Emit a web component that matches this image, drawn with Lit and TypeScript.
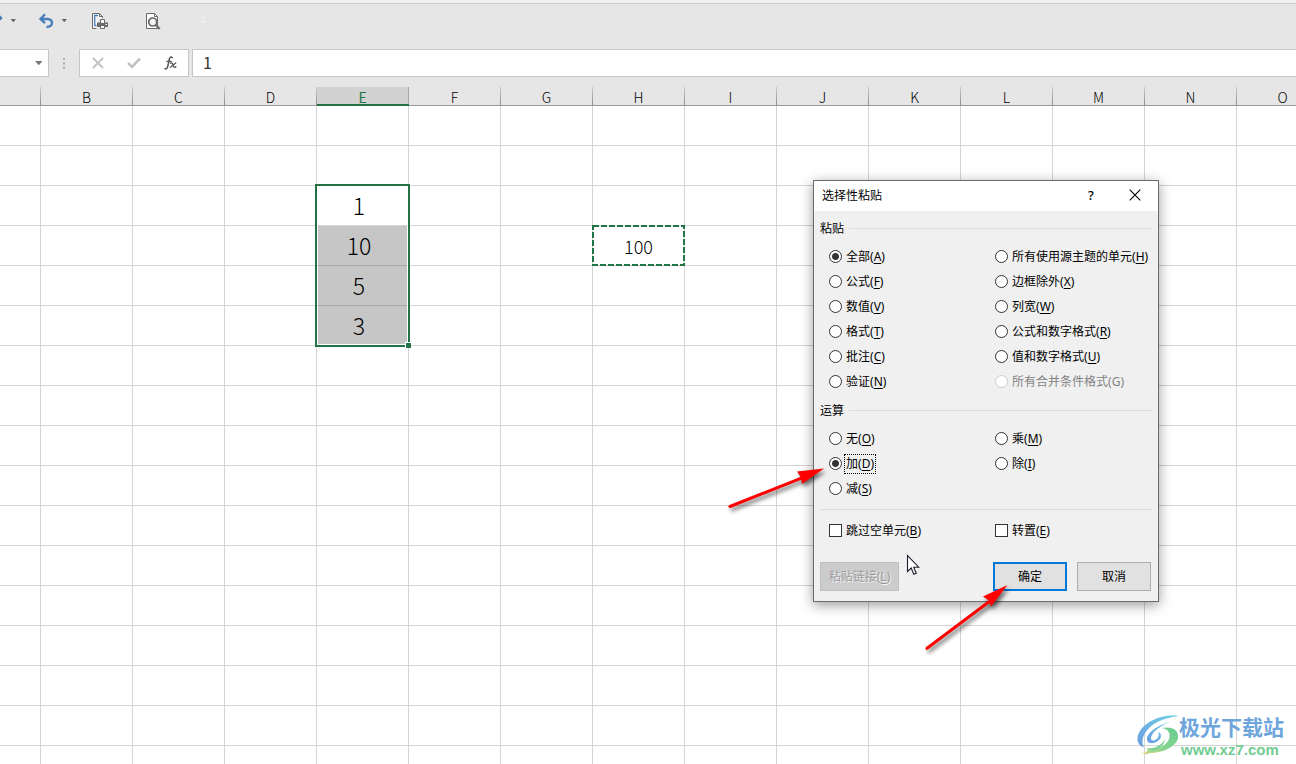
import { LitElement, html, css, nothing } from "lit";
import { customElement, state } from "lit/decorators.js";
import { classMap } from "lit/directives/class-map.js";

interface Choice {
  text: string;
  key: string;
  disabled?: boolean;
}

const PASTE: Choice[] = [
  { text: "全部", key: "A" },
  { text: "公式", key: "F" },
  { text: "数值", key: "V" },
  { text: "格式", key: "T" },
  { text: "批注", key: "C" },
  { text: "验证", key: "N" },
  { text: "所有使用源主题的单元", key: "H" },
  { text: "边框除外", key: "X" },
  { text: "列宽", key: "W" },
  { text: "公式和数字格式", key: "R" },
  { text: "值和数字格式", key: "U" },
  { text: "所有合并条件格式", key: "G", disabled: true },
];

const OPERATION: Choice[] = [
  { text: "无", key: "O" },
  { text: "加", key: "D" },
  { text: "减", key: "S" },
  { text: "乘", key: "M" },
  { text: "除", key: "I" },
];

@customElement("paste-dialog")
export class PasteDialog extends LitElement {
  @state() private paste = "A";
  @state() private operation = "D";

  static styles = css`
    :host {
      display: block;
      box-sizing: border-box;
      width: 346px;
      border: 1px solid #6b6b6b;
      background: #f0f0f0;
      box-shadow: 0 3px 12px rgba(0, 0, 0, 0.4);
      font: 12px/16px "Noto Sans", "Noto Sans CJK SC", sans-serif;
      color: #000;
    }
    .title {
      display: flex;
      align-items: flex-start;
      height: 30px;
      padding-left: 8px;
      background: #fff;
    }
    .title h1 {
      flex: 1;
      margin: 0;
      font-size: 12px;
      font-weight: 400;
      line-height: 30px;
    }
    .title button {
      display: grid;
      place-items: center;
      width: 44px;
      height: 28px;
      padding: 0;
      border: 0;
      background: none;
      font: 500 13px/16px "Noto Sans", sans-serif;
      color: #000;
    }
    .title button:last-child {
      margin-right: 1px;
    }
    .body {
      padding: 7px 6px 10px;
    }
    .heading {
      display: flex;
      align-items: center;
      gap: 5px;
      box-sizing: border-box;
      height: 20px;
      margin: 0;
      padding-top: 2px;
      font-size: 12px;
      font-weight: 400;
    }
    .heading::after {
      content: "";
      flex: 1;
      height: 1px;
      margin-bottom: 2px;
      background: #dcdcdc;
    }
    .choices {
      display: grid;
      grid-template-columns: 166px 1fr;
      grid-auto-flow: column;
      grid-auto-rows: 25px;
      padding: 6px 0 6px 9px;
    }
    .rows6 {
      grid-template-rows: repeat(6, 25px);
    }
    .rows3 {
      grid-template-rows: repeat(3, 25px);
      padding-bottom: 8px;
    }
    .checks {
      grid-template-rows: 25px;
      padding: 8px 0 19px 9px;
      border-top: 1px solid #dcdcdc;
    }
    label {
      display: flex;
      align-items: center;
      gap: 4px;
      white-space: nowrap;
    }
    label.off {
      color: #838383;
    }
    label.off u {
      text-decoration: none;
    }
    u {
      text-underline-offset: 2px;
      text-decoration-skip-ink: none;
    }
    input {
      appearance: none;
      flex: none;
      box-sizing: border-box;
      width: 13px;
      height: 13px;
      margin: 0;
      border: 1px solid #333;
      background: #fff;
      outline: none;
    }
    input[type="radio"] {
      border-radius: 50%;
    }
    input[type="radio"]:checked {
      background: radial-gradient(circle, #333 3px, #fff 4px);
    }
    input:disabled {
      border-color: #ccc;
    }
    .focus {
      outline: 1px dotted #000;
      outline-offset: 1px;
    }
    .actions {
      display: flex;
      gap: 10px;
      padding-right: 1px;
    }
    .actions button {
      box-sizing: border-box;
      width: 74px;
      height: 29px;
      padding: 0;
      border: 1px solid #adadad;
      background: #e1e1e1;
      font: inherit;
      color: #000;
    }
    .actions .link {
      width: 79px;
      margin-right: auto;
      border-color: #bfbfbf;
      background: #ccc;
      color: #9c9c9c;
      text-shadow: 1px 1px 0 #f4f4f4;
    }
    .actions .primary {
      border: 2px solid #0078d7;
    }
  `;

  private radio(group: "paste" | "operation", c: Choice) {
    const on = this[group] === c.key;
    return html`<label class=${classMap({ off: !!c.disabled })}>
      <input
        type="radio"
        name=${group}
        value=${c.key}
        .checked=${on}
        ?disabled=${c.disabled}
        @change=${() => (this[group] = c.key)}
      /><span class=${classMap({ focus: on && group === "operation" })}>${c.text}(<u>${c.key}</u>)</span>
    </label>`;
  }

  render() {
    return html`
      <div class="title">
        <h1>选择性粘贴</h1>
        <button type="button" aria-label="帮助">?</button>
        <button type="button" aria-label="关闭">
          <svg width="12" height="12" viewBox="0 0 12 12" stroke="#000" stroke-width="1.100">
            <path d="M.7 .7 11.300 11.300M11.300 .7 .7 11.300" />
          </svg>
        </button>
      </div>
      <div class="body">
        <h2 class="heading">粘贴</h2>
        <div class="choices rows6" role="radiogroup" aria-label="粘贴">
          ${PASTE.map((c) => this.radio("paste", c))}
        </div>
        <h2 class="heading">运算</h2>
        <div class="choices rows3" role="radiogroup" aria-label="运算">
          ${OPERATION.map((c) => this.radio("operation", c))}
        </div>
        <div class="choices checks">
          <label><input type="checkbox" /><span>跳过空单元(<u>B</u>)</span></label>
          <label><input type="checkbox" /><span>转置(<u>E</u>)</span></label>
        </div>
        <div class="actions">
          <button type="button" class="link" disabled>粘贴链接(<u>L</u>)</button>
          <button type="button" class="primary">确定</button>
          <button type="button">取消</button>
        </div>
      </div>
    `;
  }
}

const COLUMNS = "ABCDEFGHIJKLMNO".split("");
const ROWS = Array.from({ length: 17 }, (_, i) => i + 1);
const VALUES: Record<string, string> = { E3: "1", E4: "10", E5: "5", E6: "3", H4: "100" };

@customElement("sheet-grid")
export class SheetGrid extends LitElement {
  static styles = css`
    :host {
      display: block;
      overflow: hidden;
      background: #fff;
      font-family: "Noto Sans CJK SC", "Noto Sans", sans-serif;
    }
    table {
      table-layout: fixed;
      width: 1329px;
      border-spacing: 0;
    }
    .col {
      width: 92px;
    }
    .first {
      width: 41px;
    }
    th,
    td {
      box-sizing: border-box;
      padding: 0;
      text-align: center;
    }
    thead tr {
      background: #e6e6e6;
    }
    th {
      height: 29px;
      padding-top: 12px;
      padding-right: 1px;
      border-bottom: 1px solid #999;
      background: linear-gradient(#c9c9c9, #8f8f8f) right bottom / 1px 18px no-repeat;
      font-size: 14px;
      font-weight: 300;
      line-height: 16px;
      color: #000;
    }
    th.active {
      padding-top: 13px;
      padding-bottom: 0;
      border-bottom: 2px solid #217346;
      line-height: 14px;
      background:
        linear-gradient(#a6a6a6, #a6a6a6) right bottom / 1px 17px no-repeat,
        linear-gradient(#d2d2d2, #d2d2d2) right bottom / 100% 17px no-repeat;
      font-weight: 400;
      color: #217346;
    }
    td {
      position: relative;
      height: 40px;
      border-right: 1px solid #d4d4d4;
      border-bottom: 1px solid #d4d4d4;
      font-size: 18px;
      font-weight: 300;
      line-height: 24px;
    }
    .picked {
      padding-right: 7px;
      padding-bottom: 2px;
      font-size: 23px;
    }
    .shaded {
      background: #c6c6c6;
      border-bottom-color: #a6a6a6;
    }
    .range {
      position: absolute;
      z-index: 1;
      box-sizing: border-box;
      top: -2px;
      left: -2px;
      right: -2px;
      height: 163px;
      border: 2px solid #217346;
      box-shadow: inset 0 0 0 1px #fff;
    }
    .range::after {
      content: "";
      position: absolute;
      right: -3px;
      bottom: -3px;
      width: 5px;
      height: 5px;
      border: solid #fff;
      border-width: 1px 0 0 1px;
      background: #217346;
    }
    .ants {
      position: absolute;
      top: -1px;
      left: -1px;
    }
  `;

  private cell(id: string) {
    const picked = /^E[3-6]$/.test(id);
    const classes = { picked, shaded: picked && id !== "E3" };
    return html`<td class=${classMap(classes)}>
      ${VALUES[id] ?? nothing}
      ${id === "E3" ? html`<div class="range"></div>` : nothing}
      ${id === "H4"
        ? html`<svg class="ants" width="93" height="41" viewBox="0 0 93 41" fill="none">
            <rect x="1" y="1" width="91" height="39" stroke="#217346" stroke-width="2" stroke-dasharray="6 2" />
          </svg>`
        : nothing}
    </td>`;
  }

  render() {
    return html`<table>
      <colgroup>
        ${COLUMNS.map((c) => html`<col class=${c === "A" ? "first" : "col"} />`)}
      </colgroup>
      <thead>
        <tr>
          ${COLUMNS.map(
            (c) => html`<th scope="col" class=${classMap({ active: c === "E" })}>${c === "A" ? nothing : c}</th>`
          )}
        </tr>
      </thead>
      <tbody>
        ${ROWS.map((r) => html`<tr>${COLUMNS.map((c) => this.cell(c + r))}</tr>`)}
      </tbody>
    </table>`;
  }
}

const caret = html`<svg width="7" height="4" viewBox="0 0 7 4"><path d="M.5 0h5.500L3.250 3.200z" fill="#666" /></svg>`;

@customElement("app-root")
export class AppRoot extends LitElement {
  static styles = css`
    :host {
      position: relative;
      display: flex;
      flex-direction: column;
      height: 100vh;
      overflow: hidden;
      background: #e6e6e6;
      font-family: "Noto Sans CJK SC", "Noto Sans", sans-serif;
    }
    button {
      display: grid;
      place-items: center;
      padding: 0;
      border: 0;
      background: none;
    }
    .toolbar {
      display: flex;
      align-items: flex-start;
      box-sizing: border-box;
      height: 49px;
      padding-top: 8px;
      border-top: 3px solid #f0f0f0;
      background: linear-gradient(#cfcfcf, #cfcfcf) top / 100% 1px no-repeat;
    }
    .tool {
      flex: none;
      width: 16px;
      height: 20px;
    }
    .drop {
      flex: none;
      width: 15px;
      height: 20px;
      margin-left: 3px;
    }
    .redo {
      margin-left: -13px;
    }
    .undo {
      margin-left: 17px;
    }
    .print {
      margin-left: 20px;
    }
    .preview {
      margin-left: 38px;
    }
    .more {
      margin-left: 34px;
    }
    .formula {
      display: flex;
      height: 28px;
    }
    .name,
    .tools,
    .value {
      box-sizing: border-box;
      border: 1px solid #c6c6c6;
      background: #fff;
    }
    .name {
      display: flex;
      width: 49px;
      border-left: 0;
    }
    .name input {
      flex: 1;
      min-width: 0;
      padding: 0;
      border: 0;
      outline: 0;
    }
    .name button {
      width: 18px;
    }
    .dots {
      display: grid;
      place-items: center;
      width: 30px;
    }
    .tools {
      display: grid;
      grid-template-columns: repeat(3, 36px);
      width: 110px;
      margin-right: 3px;
    }
    .value {
      flex: 1;
      min-width: 0;
      padding: 0 0 2px 10px;
      border-right: 0;
      font: 400 16px/24px "Noto Sans CJK SC", sans-serif;
      color: #333;
      outline: 0;
    }
    .sheet {
      flex: 1;
      min-height: 0;
    }
    .dialog {
      position: absolute;
      z-index: 2;
      left: 813px;
      top: 180px;
    }
    .arrow {
      position: absolute;
      z-index: 3;
      fill: #f00;
      stroke: #f00;
      filter: drop-shadow(2px 3px 2px rgba(0, 0, 0, 0.6));
      pointer-events: none;
    }
    .add {
      left: 720px;
      top: 460px;
    }
    .ok {
      left: 920px;
      top: 580px;
    }
    .pointer {
      position: absolute;
      z-index: 3;
      left: 906px;
      top: 554px;
      pointer-events: none;
    }
    .brand {
      position: absolute;
      z-index: 1;
      right: 12px;
      bottom: 6px;
      display: flex;
      align-items: center;
      color: #6ea5db;
      text-decoration: none;
    }
    .brand span {
      display: block;
      font: 700 21px/30px "Noto Sans CJK SC", sans-serif;
    }
    .brand .site {
      font: 700 15px/17px "Liberation Sans", sans-serif;
      color: #72cc92;
      padding-left: 2px;
    }
  `;

  render() {
    return html`
      <div class="toolbar" role="toolbar">
        <button class="tool redo" aria-label="恢复">
          <svg width="16" height="16" viewBox="0 0 16 16" fill="none" stroke="#4a7ebb" stroke-width="2.400">
            <path d="M14 5H7C3 5 2 8 2 9.500 2 12 4 13.500 6 13.500M9.500 .5 14 5l-4.500 4.500" />
          </svg>
        </button>
        <button class="drop" aria-label="恢复选项">${caret}</button>
        <button class="tool undo" aria-label="撤消">
          <svg width="16" height="16" viewBox="0 0 16 16" fill="none" stroke="#4a7ebb" stroke-width="2.400">
            <path d="M2.500 6H9.500C13 6 14 8.300 14 9.800 14 12.500 12 14 8.500 14" />
            <path d="M7 1.200 2.500 6 7 10.200" />
          </svg>
        </button>
        <button class="drop" aria-label="撤消选项">${caret}</button>
        <button class="tool print" aria-label="快速打印">
          <svg width="16" height="17" viewBox="0 0 16 17" fill="none">
            <path d="M.5 .5H7.500L10.500 3.500V6H6V15.500H.5z" fill="#f6f6f6" />
            <path d="M4.500 15.500H.5V.5H7.500L10.500 3.500V5M7.500 .5V3.500H10.500" stroke="#6a6a6a" />
            <path d="M6 2.500H2.700V12.500H4.500" stroke="#4a7ebb" stroke-width="1.300" />
            <path d="M5 9.500H16V14H5z" fill="#6a6a6a" />
            <path d="M8.500 6.500H12.500V10.500H8.500zM8.500 12.500H12.500V15.500H8.500z" fill="#fff" stroke="#6a6a6a" />
            <path d="M13.500 11.500h1.500" stroke="#fff" />
          </svg>
        </button>
        <button class="tool preview" aria-label="打印预览">
          <svg width="16" height="17" viewBox="0 0 16 17" fill="none">
            <path d="M.5 .5H8.500L11.500 3.500V15.500H.5z" fill="#fff" stroke="#6a6a6a" />
            <path d="M8.500 .5V3.500H11.500" stroke="#6a6a6a" />
            <circle cx="6.700" cy="9" r="4" fill="#f4f4f4" stroke="#6a6a6a" stroke-width="1.700" />
            <path d="M9.700 12 13.700 16" stroke="#6a6a6a" stroke-width="2.300" />
          </svg>
        </button>
        <button class="drop more" aria-label="自定义快速访问工具栏">
          <svg width="7" height="8" viewBox="0 0 7 8"><path d="M1 0h5v1H1zM1 4h5L3.500 6.500z" fill="#f4f4f4" /></svg>
        </button>
      </div>
      <div class="formula">
        <div class="name">
          <input type="text" aria-label="名称框" />
          <button aria-label="名称列表">
            <svg width="8" height="5" viewBox="0 0 8 5"><path d="M0 0H7.500L3.750 4.300z" fill="#777" /></svg>
          </button>
        </div>
        <div class="dots">
          <svg width="2" height="11" viewBox="0 0 2 11" fill="#aaa"><path d="M0 0h2v2H0zM0 4.500h2v2H0zM0 9h2v2H0z" /></svg>
        </div>
        <div class="tools">
          <button aria-label="取消输入">
            <svg width="12" height="12" viewBox="0 0 12 12" stroke="#c3c3c3" stroke-width="1.900"><path d="M1 1 11 11M11 1 1 11" /></svg>
          </button>
          <button aria-label="输入">
            <svg width="14" height="12" viewBox="0 0 14 12" fill="none" stroke="#c3c3c3" stroke-width="2.600"><path d="M1 6 5 10 13 1.500" /></svg>
          </button>
          <button aria-label="插入函数">
            <svg width="13" height="14" viewBox="0 0 13 14" fill="none" stroke="#555" stroke-linecap="round">
              <path d="M8.300 1.600C7 .4 5.800 1 5.300 3.200L3.800 10C3.300 12.500 2.300 13.500 1 12.600" stroke-width="1.500" />
              <path d="M2.800 5.300H7.300" stroke-width="1.200" />
              <path d="M6.500 7.200C8 6.300 8.500 7.500 9 9.200S10.300 11.800 11.800 10.800" stroke-width="1.400" />
              <path d="M11.800 7 6.300 11.300" stroke-width="1.200" />
            </svg>
          </button>
        </div>
        <input class="value" type="text" aria-label="编辑栏" .value=${"1"} />
      </div>
      <sheet-grid class="sheet"></sheet-grid>

      <paste-dialog class="dialog" role="dialog" aria-label="选择性粘贴"></paste-dialog>

      <svg class="arrow add" width="112" height="56" viewBox="0 0 112 56">
        <path d="M10 46.500 82 17.800" stroke-width="3" stroke-linecap="round" />
        <path d="M104 8.500 77 11.500 81 17.500 82 24z" stroke="none" />
      </svg>
      <svg class="arrow ok" width="96" height="78" viewBox="0 0 96 78">
        <path d="M7 68.300 70 21" stroke-width="3" stroke-linecap="round" />
        <path d="M87.500 5 63 16.500 69 20.500 71 26.500z" stroke="none" />
      </svg>
      <svg class="pointer" width="14" height="22" viewBox="0 0 14 22">
        <path d="M1.500 1.500V17.500L5.200 14 7.800 20.300 10.300 19.200 7.700 13.200H12.800z" fill="#fff" stroke="#1c1c2c" stroke-width="1.100" />
      </svg>

      <a class="brand" href="#">
        <svg width="42" height="42" viewBox="0 0 42 42">
          <defs>
            <linearGradient id="sky" x1="1" y1="0" x2="0" y2="1">
              <stop offset="0" stop-color="#6fd0e4" />
              <stop offset="1" stop-color="#6b9ce2" />
            </linearGradient>
            <linearGradient id="leaf" x1="1" y1="0" x2="0" y2="1">
              <stop offset="0" stop-color="#68cc90" />
              <stop offset="0.600" stop-color="#88d492" />
              <stop offset="1" stop-color="#f3dc80" />
            </linearGradient>
          </defs>
          <path d="M42 2C24-1 1 10 .5 25 .5 29 3 32 7 33.500 3 26 7 17 17 10 25 5 34 3 42 2z" fill="url(#sky)" />
          <path d="M33 8C21 11 9 19 10 26 11 31 19 30 23 25 25 22 24 19 21 18 23 21 21 25 17 26.500 13 27 13 23 17 18 21 14 27 10 33 8z" fill="url(#sky)" />
          <path d="M25 14C35 12 42 16 41 24 39 34 21 42 3 38 15 38 29 33 32 25 34 19 31 15 25 14z" fill="url(#leaf)" />
          <path d="M10 34C18 35 25 31 28 25 27 34 15 40 5 41 9 39 12 37 10 34z" fill="url(#leaf)" />
        </svg>
        <div>
          <span>极光下载站</span>
          <span class="site">www.xz7.com</span>
        </div>
      </a>
    `;
  }
}
